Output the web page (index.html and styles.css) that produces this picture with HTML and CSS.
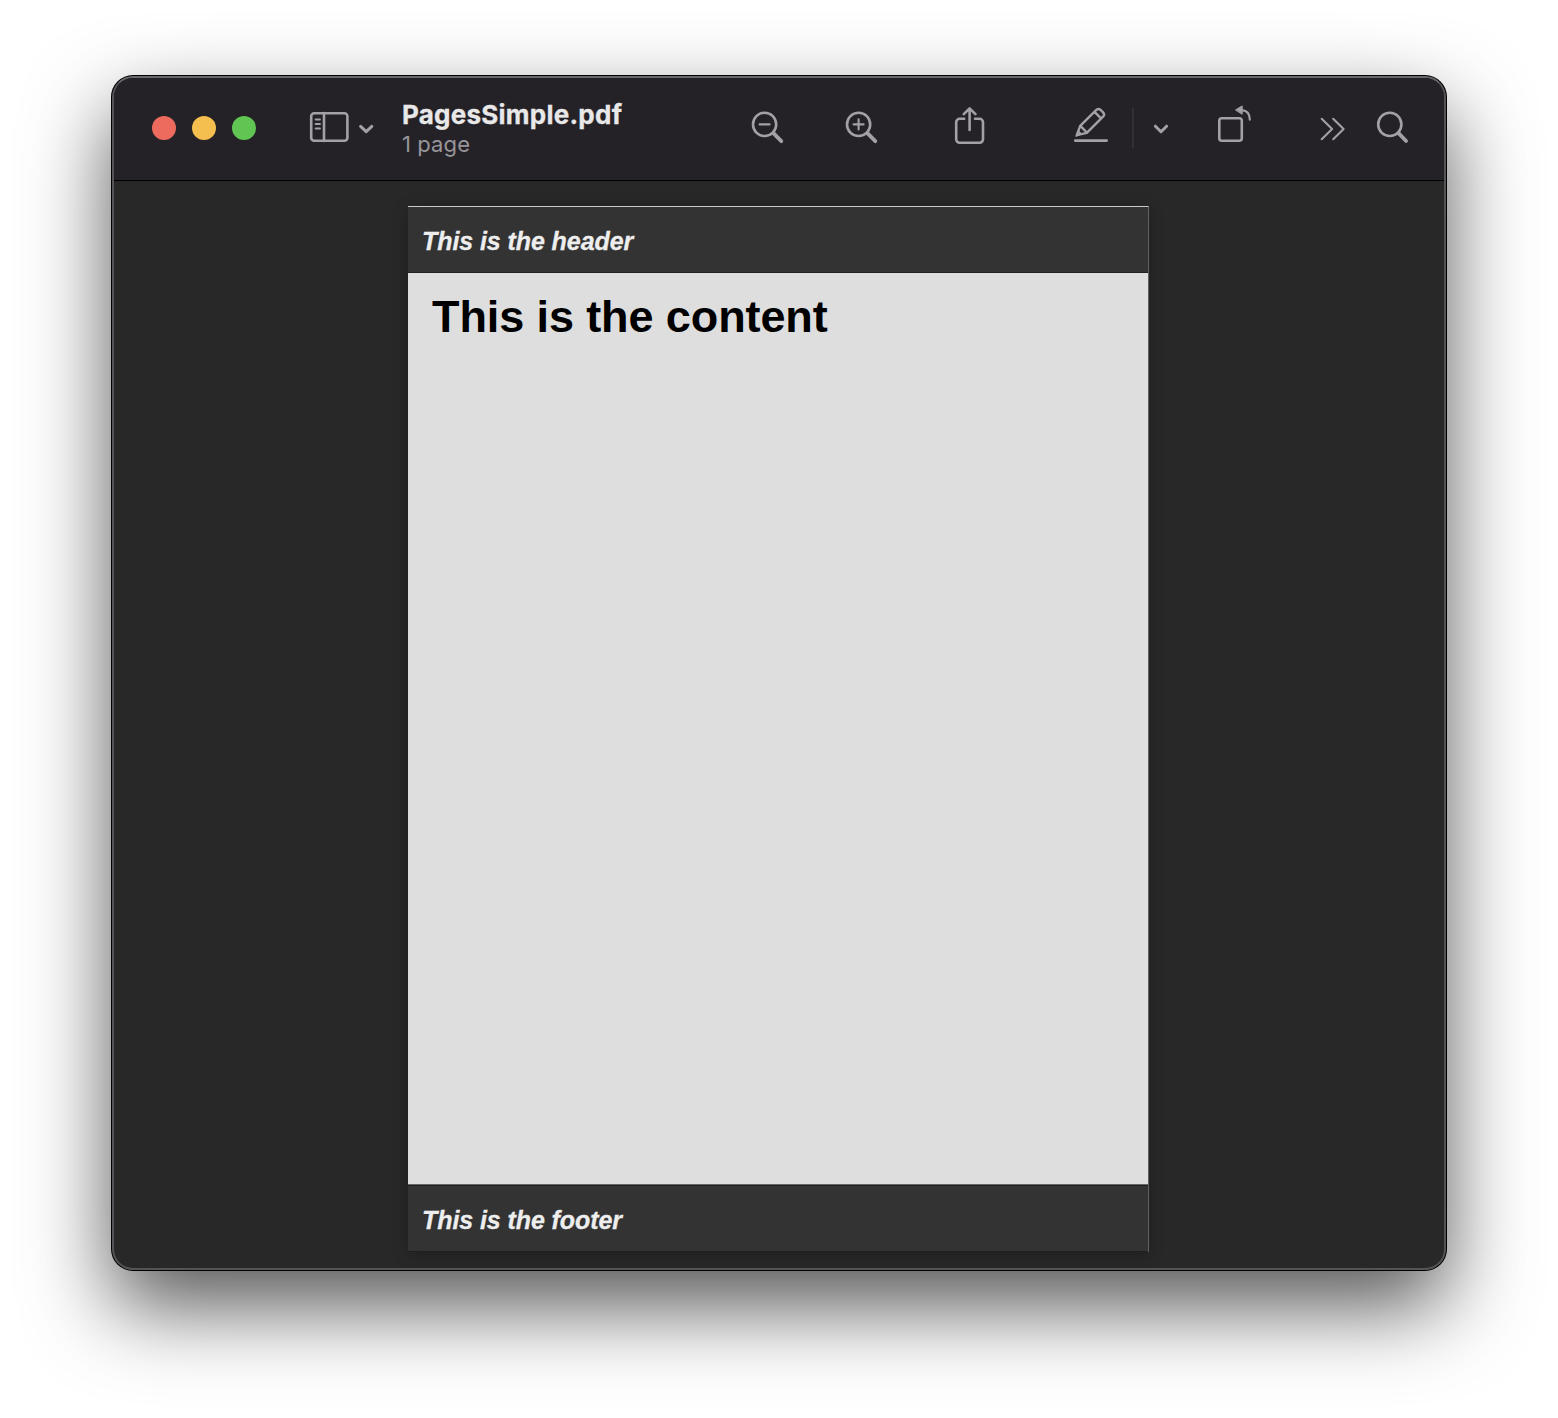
FILE: index.html
```html
<!DOCTYPE html>
<html lang="en">
<head>
<meta charset="utf-8">
<title>PagesSimple.pdf</title>
<link rel="stylesheet" href="styles.css">
</head>
<body>
<main class="window">
  <header class="toolbar">
    <div class="lights"><span class="light red"></span><span class="light yellow"></span><span class="light green"></span></div>
    <svg class="icon sidebar" width="66" height="40" viewBox="308 107 66 40">
      <rect x="311.2" y="113.2" width="36.2" height="27.6" rx="3"/>
      <path d="M324 113v28"/>
      <path class="thin" d="M315.7 119.5h4.2M315.7 124h4.2M315.7 128.5h4.2"/>
      <path class="bold" d="M360.6 126.3l5.6 5.4 5.6-5.4"/>
    </svg>
    <div class="titles"><h1 class="title">PagesSimple.pdf</h1><p class="subtitle">1 page</p></div>
    <svg class="icon zoom-out" width="36" height="40" viewBox="750 107 36 40">
      <circle cx="764.6" cy="124.4" r="11.6"/><path class="thin" d="M759.6 124.4h10"/><path class="handle" d="M773.4 133.2l7.9 8"/>
    </svg>
    <svg class="icon zoom-in" width="36" height="40" viewBox="844 107 36 40">
      <circle cx="858.6" cy="124.4" r="11.6"/><path class="thin" d="M853.6 124.4h10M858.6 119.4v10"/><path class="handle" d="M867.4 133.2l7.9 8"/>
    </svg>
    <svg class="icon share" width="36" height="40" viewBox="952 107 36 40">
      <path d="M964.2 118.8h-4.5a3.5 3.5 0 0 0-3.5 3.5v17a3.5 3.5 0 0 0 3.5 3.5h19.8a3.5 3.5 0 0 0 3.5-3.5v-17a3.5 3.5 0 0 0-3.5-3.5h-4.5M969.6 130V109M963.8 114.2l5.8-5.8 5.8 5.8"/>
    </svg>
    <svg class="icon markup" width="38" height="40" viewBox="1072 107 38 40">
      <path d="M1075.2 140.6h31.5"/>
      <path class="pencil" d="M1076.8 135.2l3.4-9.3 16.4-16.2q2-1.6 4 .2l2.5 2.5q1.9 2 .2 4l-16.5 16.5zM1094.5 111.9l6.5 6.5M1080.4 125.8l6.4 6.7"/>
      <path class="fill" d="M1076 136l2.2-5.7 3.2 3.5z"/>
    </svg>
    <span class="divider"></span>
    <svg class="icon chevron" width="18" height="40" viewBox="1152 107 18 40"><path class="bold" d="M1155.4 126.2l5.6 5.6 5.6-5.6"/></svg>
    <svg class="icon rotate" width="38" height="44" viewBox="1216 105 38 44">
      <rect x="1219.3" y="118.3" width="22.5" height="22.4" rx="2.5"/>
      <path class="thin" d="M1242 110.1q7.8.6 7.8 9.6"/><path class="fill" d="M1235.8 109.8l6.4-3.9v8z"/>
    </svg>
    <svg class="icon more" width="28" height="40" viewBox="1319 107 28 40"><path class="thin" d="M1321.7 118.8l10.4 10.2-10.4 10.2M1333.2 118.8l10.4 10.2-10.4 10.2"/></svg>
    <svg class="icon search" width="36" height="40" viewBox="1375 107 36 40">
      <circle cx="1389.8" cy="124.4" r="11.6"/><path class="handle" d="M1398.5 133.2l7.6 7.8"/>
    </svg>
  </header>
  <section class="viewer">
    <article class="page">
      <div class="band band-top">This is the header</div>
      <h2 class="content">This is the content</h2>
      <div class="band band-bottom">This is the footer</div>
    </article>
  </section>
</main>
</body>
</html>
```

FILE: styles.css
```css
* { box-sizing: border-box; }
body { margin: 0; padding: 76px 112px; width: 1558px; height: 1418px; overflow: hidden; background: #fff; font-family: Inter, sans-serif; }
.window {
  width: 1334px; height: 1194px; border: 2px solid #555357; border-top-color: #69676b; border-radius: 21px;
  background: #282828; overflow: hidden;
  box-shadow: 0 0 0 1px #000, 0 36px 84px rgba(0,0,0,.67);
}
.toolbar { display: flex; align-items: center; height: 103px; padding: 0 0 5px 38px; border-bottom: 1px solid #000; background: #242127; }
.lights { display: flex; gap: 16px; padding-top: 2px; }
.light { width: 24px; height: 24px; border-radius: 50%; }
.red { background: #ed6a5e; }
.yellow { background: #f5bf4f; }
.green { background: #61c554; }
.icon { flex: none; fill: none; stroke: #a3a0a6; stroke-width: 2.6; stroke-linecap: round; stroke-linejoin: round; }
.thin { stroke-width: 2.1; }
.bold { stroke-width: 3; }
.handle { stroke-width: 3.8; }
.pencil { stroke-width: 2.4; }
.fill { fill: #a3a0a6; stroke-width: 1; }
.sidebar { margin-left: 52px; }
.titles { width: 224px; margin-left: 28px; padding-top: 1px; }
.title { margin: 0; font-size: 26px; line-height: 33px; font-weight: 700; letter-spacing: .24px; color: #e9e8e9; -webkit-text-stroke: .3px #e9e8e9; white-space: nowrap; }
.subtitle { margin: 0; font-size: 22px; line-height: 26px; letter-spacing: .1px; color: #98959b; }
.zoom-out { margin-left: 124px; }
.zoom-in { margin-left: 58px; }
.share { margin-left: 72px; }
.markup { margin-left: 84px; }
.divider { width: 2px; height: 40px; margin: 2px 0 0 22px; background: #322f36; }
.chevron { margin-left: 18px; }
.rotate { margin-left: 46px; }
.more { margin-left: 65px; }
.search { margin-left: 28px; }
.viewer { height: 1087px; padding: 25px 0 0 294px; }
.page {
  display: flex; flex-direction: column; width: 741px; height: 1046px; background: #dedede; border-top: 1px solid #c9c9c9; border-right: 1px solid #626262;
  box-shadow: 0 3px 14px rgba(0,0,0,.25); font-family: "Liberation Sans", Arial, sans-serif;
}
.band { flex: none; height: 66px; padding: 1px 14px 0; background: #333; color: #eee; font-size: 25px; font-weight: 700; font-style: italic; line-height: 66px; letter-spacing: -.08px; -webkit-text-stroke: .3px #eee; }
.band-top { border-bottom: 1px solid #202020; }
.band-bottom { height: 68px; border-top: 1px solid #666; border-bottom: 1px solid #1d1d1d; box-shadow: inset 0 1px #202020; padding-top: 2px; }
.content { flex: 1; margin: 0; padding: 18px 24px; font-size: 45px; line-height: 52px; letter-spacing: -.1px; color: #000; }
```
